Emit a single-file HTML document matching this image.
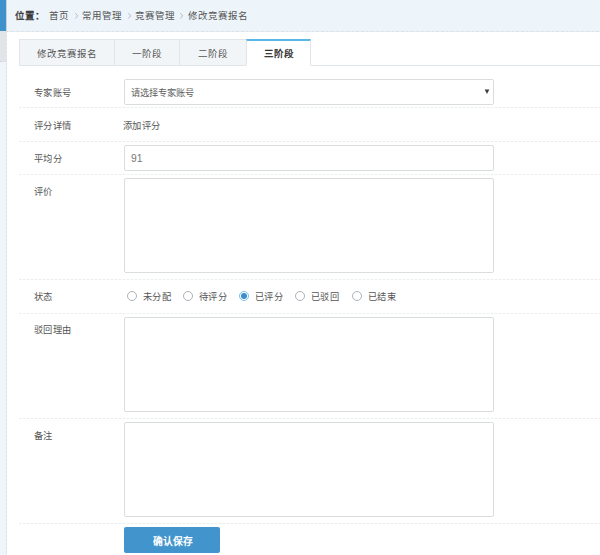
<!DOCTYPE html>
<html lang="zh-CN"><head><meta charset="utf-8">
<style>
*{box-sizing:border-box;margin:0;padding:0}
html,body{width:600px;height:555px;overflow:hidden;background:#fff}
body{font-family:"Liberation Sans",sans-serif;font-size:9.75px;color:#555;position:relative}
.strip{position:absolute;left:0;top:0;width:7px;height:555px;background:#eff5fa}
.strip:after{content:"";position:absolute;left:6px;top:31px;width:1px;height:524px;background:repeating-linear-gradient(to bottom,#d9dfe3 0 2px,#e8ecef 2px 4px)}
.strip .b{position:absolute;left:0;top:0;width:6px;height:31px;background:#3e92cc;border-right:1px solid #c9d3da;box-sizing:content-box}
.strip .g{position:absolute;left:0;top:31px;width:6px;height:31px;background:#e1e5e8;border-bottom:1px dotted #cfd5d9}
.hdr{position:absolute;left:7px;top:0;width:593px;height:32px;background:#edf4fa}
.hdr:after{content:"";position:absolute;left:0;top:31px;width:593px;height:1px;background:repeating-linear-gradient(to right,#d3dae0 0 1px,#e3e9ee 1px 5px)}
.hdr span{position:absolute;top:10px;line-height:12px;white-space:nowrap;font-size:9.5px}
.tabs{position:absolute;left:19px;top:39px;width:581px;height:27px;border-bottom:1px solid #e0e5e9}
.tab{position:absolute;top:0;height:27px;background:#f2f5f8;border:1px solid #e0e5e9;text-align:center;line-height:27px;color:#555;font-size:9.5px}
.tab.act{background:#fff;border-top:2px solid #5ab7ea;border-bottom:1px solid #fff;color:#2a2a2a;line-height:25px;-webkit-text-stroke:0.3px #2a2a2a;text-indent:0}
.row{position:absolute;left:19px;width:581px;background:repeating-linear-gradient(to right,#e9eef1 0 2px,#f9fafb 2px 4px) left bottom/100% 1px no-repeat}
.lbl{position:absolute;left:34px;line-height:12px;white-space:nowrap;color:#555;font-size:9.25px;letter-spacing:0.33px}
.inp{position:absolute;left:124px;width:370px;border:1px solid #dadcde;border-radius:2px;background:#fff}
.val{position:absolute;line-height:12px;white-space:nowrap;color:#555;font-size:9.25px}
.radio{position:absolute;top:291px;width:10px;height:10px;border:1px solid #aab2b8;border-radius:50%;background:#fff}
.radio.on{border-color:#7cc0ea}
.radio.on:after{content:"";position:absolute;left:1px;top:1px;width:6px;height:6px;border-radius:50%;background:#3b8dcb}
.rt{position:absolute;top:291px;line-height:12px;white-space:nowrap;color:#555;font-size:9.25px;letter-spacing:0.33px}
.btn{position:absolute;left:124px;top:527px;width:96px;height:26px;background:#4195cc;border-radius:2px;color:#fff;font-weight:bold;text-align:center;line-height:30px;text-indent:1px}
</style></head><body>
<div class="strip"><div class="b"></div><div class="g"></div></div>
<div class="hdr">
<span style="left:8px;color:#333;-webkit-text-stroke:0.3px #333">位置：</span>
<span style="left:42px;color:#555">首页</span>
<svg style="position:absolute;left:67px;top:12px" width="5" height="8" viewBox="0 0 5 8"><polyline points="1.3,1.3 3.7,3.9 1.3,6.5" fill="none" stroke="#b3bac0" stroke-width="1"/></svg>
<span style="left:75px;color:#555">常用管理</span>
<svg style="position:absolute;left:120px;top:12px" width="5" height="8" viewBox="0 0 5 8"><polyline points="1.3,1.3 3.7,3.9 1.3,6.5" fill="none" stroke="#b3bac0" stroke-width="1"/></svg>
<span style="left:128px;color:#555">竞赛管理</span>
<svg style="position:absolute;left:172px;top:12px" width="5" height="8" viewBox="0 0 5 8"><polyline points="1.3,1.3 3.7,3.9 1.3,6.5" fill="none" stroke="#b3bac0" stroke-width="1"/></svg>
<span style="left:181px;color:#555">修改竞赛报名</span>
</div>
<div class="tabs">
<div class="tab" style="left:0;width:96px">修改竞赛报名</div>
<div class="tab" style="left:95px;width:66px">一阶段</div>
<div class="tab" style="left:160px;width:68px">二阶段</div>
<div class="tab act" style="left:227px;width:65px">三阶段</div>
</div>

<div class="row" style="top:75px;height:33px"></div>
<div class="lbl" style="top:87px">专家账号</div>
<div class="inp" style="top:79px;height:26px"></div>
<div class="val" style="left:131px;top:87px;color:#5e5e5e">请选择专家账号</div>
<svg style="position:absolute;left:483px;top:88px" width="8" height="7" viewBox="0 0 8 7"><polygon points="1.7,1.4 6.3,1.4 4,6.1" fill="#3d3d3d"/></svg>

<div class="row" style="top:108px;height:34px"></div>
<div class="lbl" style="top:120px">评分详情</div>
<div class="val" style="left:123px;top:120px;letter-spacing:0.33px">添加评分</div>

<div class="row" style="top:141px;height:34px"></div>
<div class="lbl" style="top:153px">平均分</div>
<div class="inp" style="top:145px;height:26px"></div>
<div class="val" style="left:131px;top:153px;font-size:10.3px;color:#777">91</div>

<div class="row" style="top:174px;height:106px"></div>
<div class="lbl" style="top:186px">评价</div>
<div class="inp" style="top:178px;height:95px"></div>

<div class="row" style="top:279px;height:35px"></div>
<div class="lbl" style="top:291px">状态</div>
<div class="radio" style="left:127px"></div><div class="rt" style="left:143px">未分配</div>
<div class="radio" style="left:183px"></div><div class="rt" style="left:199px">待评分</div>
<div class="radio on" style="left:239px"></div><div class="rt" style="left:255px">已评分</div>
<div class="radio" style="left:295px"></div><div class="rt" style="left:311px">已驳回</div>
<div class="radio" style="left:352px"></div><div class="rt" style="left:368px">已结束</div>

<div class="row" style="top:313px;height:106px"></div>
<div class="lbl" style="top:324px">驳回理由</div>
<div class="inp" style="top:317px;height:95px"></div>

<div class="row" style="top:418px;height:106px"></div>
<div class="lbl" style="top:430px">备注</div>
<div class="inp" style="top:422px;height:95px"></div>

<div class="btn">确认保存</div>
</body></html>
